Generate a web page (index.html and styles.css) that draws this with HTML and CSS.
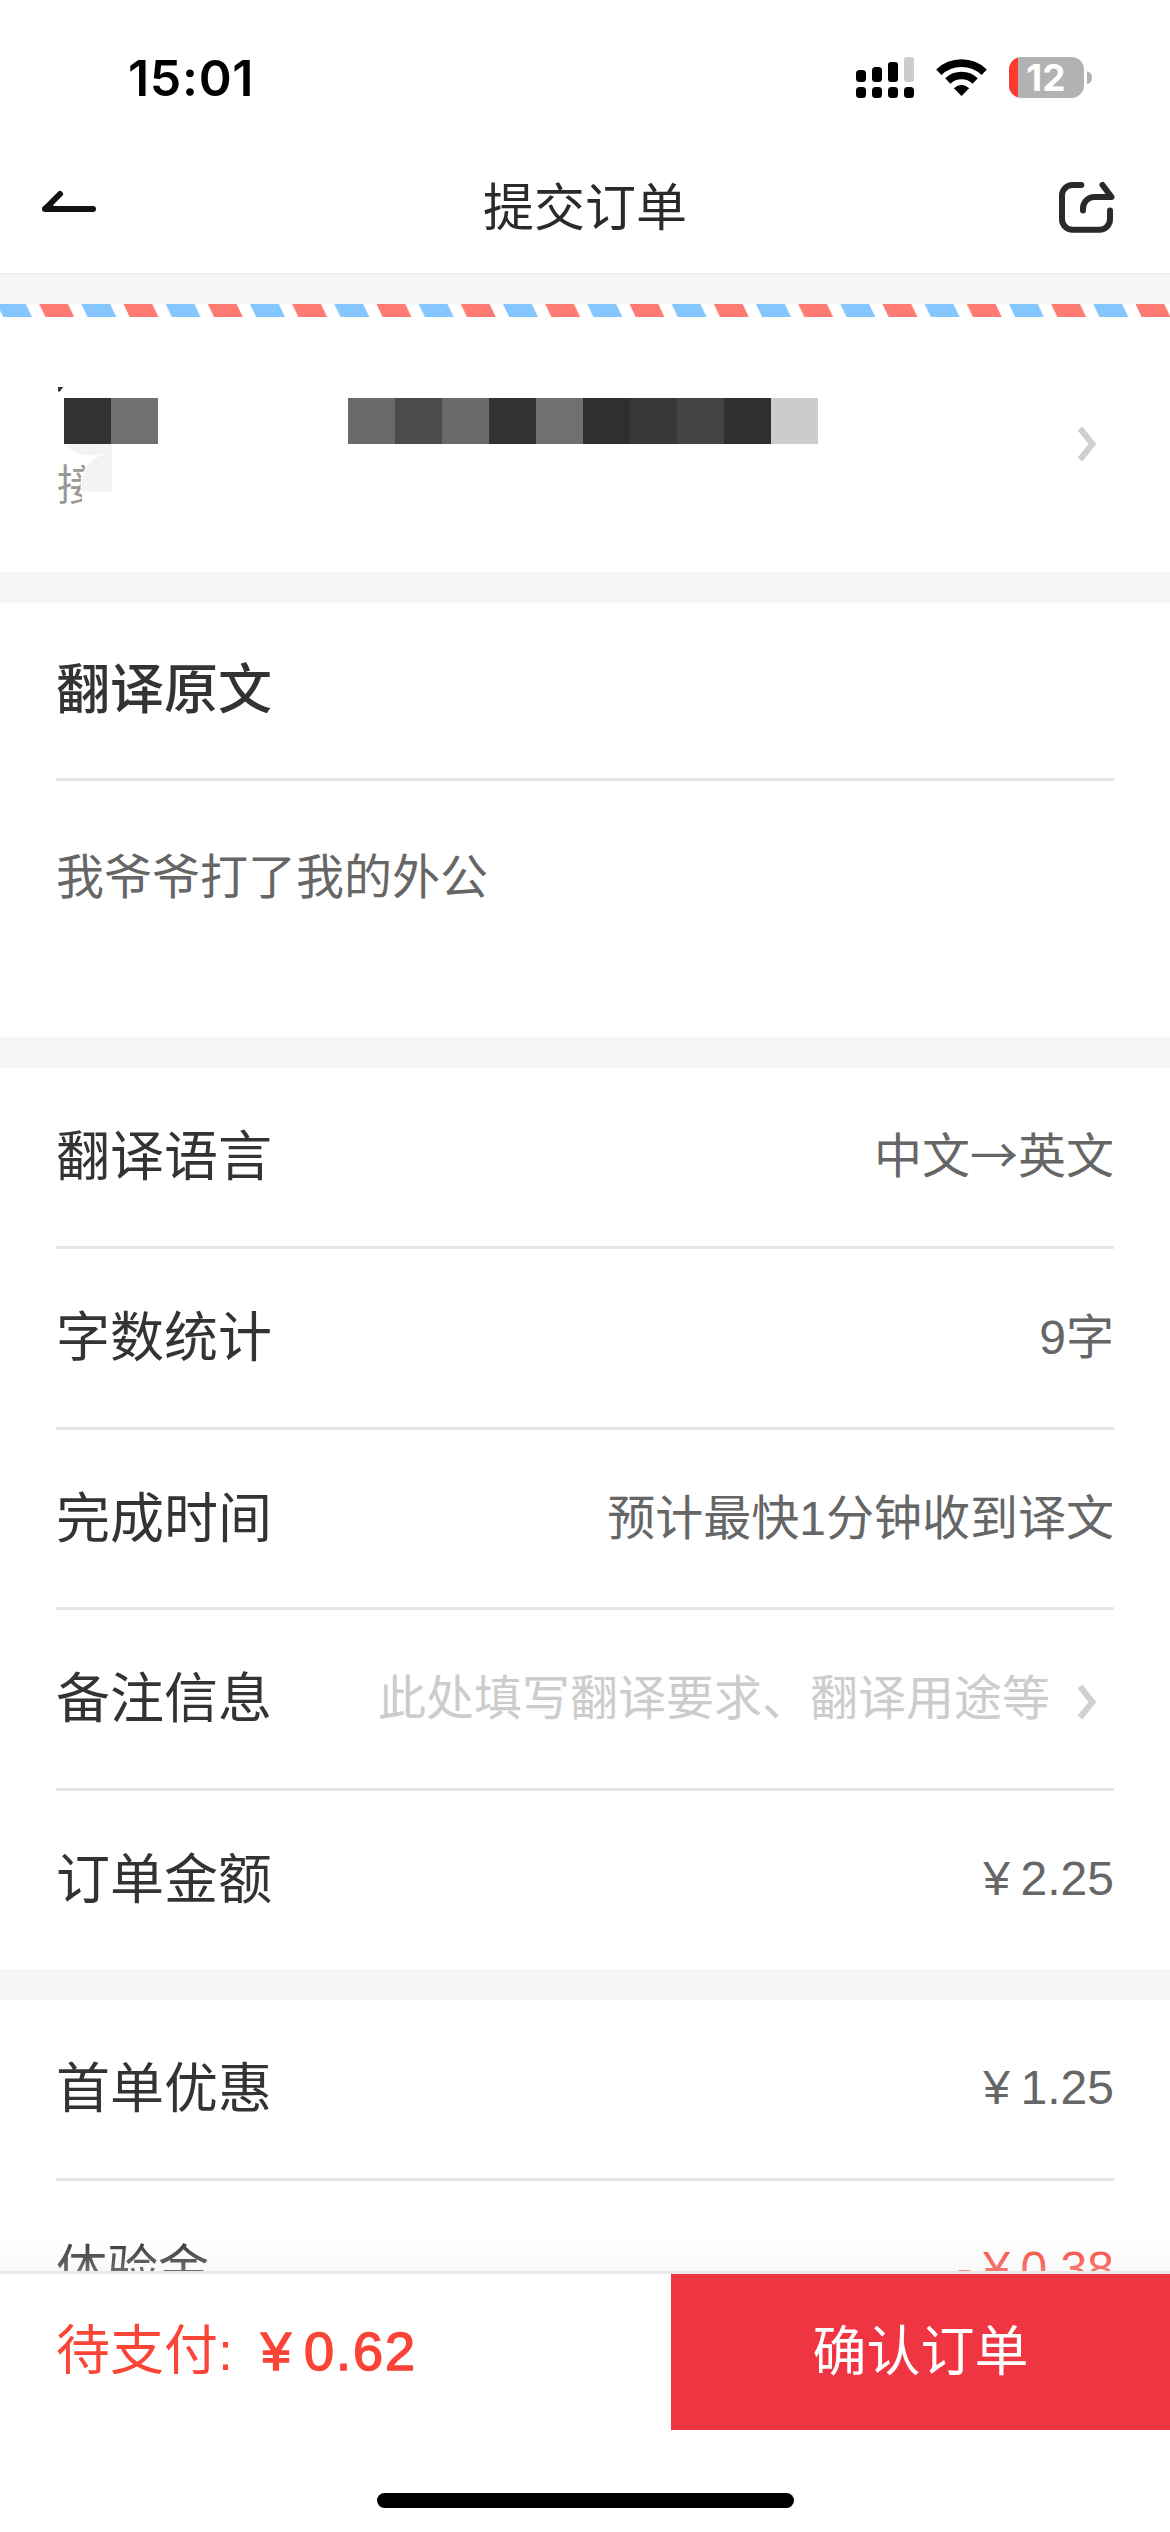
FILE: index.html
```html
<!DOCTYPE html>
<html lang="zh-CN">
<head>
<meta charset="utf-8">
<title>提交订单</title>
<link rel="stylesheet" href="styles.css">
</head>
<body>
<div class="screen">
  <div class="status">
    <span class="time">15:01</span>
    <svg class="status-icons" width="240" height="48" viewBox="855 54 240 48">
      <g fill="#000">
        <rect x="856" y="70" width="10" height="12" rx="3.5"/>
        <rect x="872" y="67" width="10" height="15" rx="3.5"/>
        <rect x="888" y="62" width="10" height="20" rx="3"/>
        <rect x="856" y="87" width="10" height="11" rx="3.5"/>
        <rect x="872" y="87" width="10" height="11" rx="3.5"/>
        <rect x="888" y="87" width="10" height="11" rx="3.5"/>
        <rect x="904" y="87" width="10" height="11" rx="3.5"/>
      </g>
      <rect x="904" y="57" width="10" height="25" rx="3" fill="#ccc"/>
      <g fill="none" stroke="#000" stroke-width="7.6">
        <path d="M938.8 72.2A33 33 0 0 1 984.2 72.2"/>
        <path d="M947.8 81A20 20 0 0 1 975.2 81"/>
      </g>
      <path d="M953.8 88.2Q961.5 81.2 969.2 88.2L961.5 96z" fill="#000"/>
      <clipPath id="cell"><rect x="1009" y="57" width="75" height="41" rx="12.5"/></clipPath>
      <g clip-path="url(#cell)">
        <rect x="1009" y="57" width="75" height="41" fill="#b2b2b2"/>
        <rect x="1009" y="57" width="9" height="41" fill="#ff3b30"/>
      </g>
      <path d="M1087 71.5a6.4 6.4 0 0 1 0 12.5z" fill="#b2b2b2"/>
      <text x="1046" y="91" class="battery-text">12</text>
    </svg>
  </div>

  <header class="nav">
    <svg width="60" height="60" viewBox="40 177 60 60" fill="none" stroke="#111214" stroke-width="6" stroke-linecap="round" stroke-linejoin="round">
      <path d="M93 210H45L60 195"/><path d="M45.5 209.5L51 208" />
    </svg>
    <h1>提交订单</h1>
    <svg width="60" height="60" viewBox="1056 177 60 60" fill="none" stroke="#282a2c" stroke-width="6" stroke-linecap="round" stroke-linejoin="round">
      <path d="M1081.3 186H1072.5A10.5 10.5 0 0 0 1062 196.500V220A10.500 10.500 0 0 0 1072.500 230.700H1099.500A10.500 10.500 0 0 0 1110 220V211.500"/>
      <path d="M1083 211.500V209.500A11.500 11.500 0 0 1 1095 198H1111.500L1102.500 186"/>
    </svg>
  </header>

  <svg class="stripes" width="1170" height="13" viewBox="0 0 1170 13">
    <defs>
      <pattern id="airmail" x="-3" width="84.33" height="13" patternUnits="userSpaceOnUse">
        <path d="M0 0H28.800L35 13H6.200z" fill="#84c6fd"/>
        <path d="M42.160 0H70.960L77.160 13H48.360z" fill="#fd7b73"/>
      </pattern>
    </defs>
    <rect width="1170" height="13" fill="url(#airmail)"/>
  </svg>

  <section class="contact">
    <div class="contact-info">
      <div class="contact-line">
        <div class="mosaic">
          <i class="g1"></i><i class="g2"></i>
        </div>
        <div class="mosaic">
          <i class="g3"></i><i class="g4"></i><i class="g3"></i><i class="g1"></i><i class="g2"></i><i class="g5"></i><i class="g6"></i><i class="g7"></i><i class="g5"></i><i class="g8"></i>
        </div>
      </div>
      <p class="contact-sub">接</p>
      <svg class="smudge" width="60" height="130" viewBox="56 385 60 130">
        <path d="M58 387H63.500L62 388.500L60 391.500H58z" fill="#333"/>
        <path d="M88 463Q77 480 82 495V510H112V463z" fill="#fff"/>
        <path d="M64 444H112V491.500H82Q79 462 107 453Q81 461 64 444z" fill="#f3f3f3"/>
      </svg>
    </div>
    <svg class="chev" width="24" height="38" viewBox="0 0 24 38"><path d="M4 3.500L16.500 19L4 34.500"/></svg>
  </section>

  <section class="card source">
    <h2>翻译原文</h2>
    <p>我爷爷打了我的外公</p>
  </section>

  <section class="card">
    <div class="row"><span class="label">翻译语言</span><span class="value">中文<span class="arrow">→</span>英文</span></div>
    <div class="row"><span class="label">字数统计</span><span class="value">9字</span></div>
    <div class="row tight"><span class="label">完成时间</span><span class="value">预计最快1分钟收到译文</span></div>
    <div class="row"><span class="label">备注信息</span><span class="value hint">此处填写翻译要求、翻译用途等</span><svg class="chev low" width="24" height="38" viewBox="0 0 24 38"><path d="M4 3.500L16.500 19L4 34.500"/></svg></div>
    <div class="row"><span class="label">订单金额</span><span class="value money"><span class="yen">¥</span>2.25</span></div>
  </section>

  <section class="card last">
    <div class="row"><span class="label">首单优惠</span><span class="value money"><span class="yen">¥</span>1.25</span></div>
    <div class="row"><span class="label small">体验金</span><span class="value money red">-<span class="yen">¥</span>0.38</span></div>
  </section>

  <footer class="pay">
    <div class="pay-row">
      <div class="due">待支付:<strong><span class="yen">¥</span>0.62</strong></div>
      <button class="confirm">确认订单</button>
    </div>
    <div class="home"></div>
  </footer>
</div>
</body>
</html>
```
FILE: styles.css
```css
* { box-sizing: border-box; margin: 0; padding: 0; }

body {
  width: 1170px;
  background: #f5f6f8;
  font-family: "Liberation Sans", "Noto Sans CJK SC", sans-serif;
  color: #333;
}

svg { display: block; flex: none; }

.screen {
  width: 1170px;
  height: 2532px;
  display: flex;
  flex-direction: column;
  overflow: hidden;
}

.status {
  flex: none;
  height: 141px;
  padding: 54px 75px 0 128px;
  display: flex;
  justify-content: space-between;
  background: #fff;
}

.time {
  font: 600 50px/48px Inter, sans-serif;
  letter-spacing: .7px;
  color: #000;
}

.battery-text {
  font: 700 37px Inter, sans-serif;
  fill: #fff;
  text-anchor: middle;
}

.nav {
  flex: none;
  height: 134px;
  padding: 0 54px 2px 40px;
  display: flex;
  align-items: center;
  justify-content: space-between;
  background: #fff;
  border-bottom: 2px solid #ededee;
}

.nav h1 {
  font-size: 51px;
  font-weight: 400;
  line-height: 60px;
  color: #282a2c;
  margin-left: 14px;
  padding-top: 5px;
}

.stripes { margin-top: 29px; background: #fff; }

.contact {
  flex: none;
  height: 255px;
  margin-bottom: 31px;
  padding: 81px 70px 0 57px;
  display: flex;
  justify-content: space-between;
  background: #fff;
}

.contact-info { position: relative; }

.contact-line { display: flex; gap: 190px; padding-left: 7px; }

.mosaic { display: flex; }
.mosaic i { width: 47px; height: 46px; }
.mosaic .g1 { background: #323232; }
.mosaic .g2 { background: #707070; }
.mosaic .g3 { background: #6a6a6a; }
.mosaic .g4 { background: #4b4b4b; }
.mosaic .g5 { background: #2f2f2f; }
.mosaic .g6 { background: #383838; }
.mosaic .g7 { background: #444; }
.mosaic .g8 { background: #ccc; }

.contact-sub {
  margin-top: 12px;
  font-size: 42px;
  line-height: 60px;
  color: #999;
}

.smudge { position: absolute; left: -1px; top: -13px; }

.chev { fill: none; stroke: #d0d0d0; stroke-width: 6; }
.contact .chev { margin-top: 27px; }
.chev.low { margin: 6px 14px 0 26px; }

.card {
  flex: none;
  margin-bottom: 31px;
  padding: 0 56px;
  background: #fff;
}

.source { height: 434px; }

.source h2 {
  height: 178px;
  border-bottom: 3px solid #e5e5e5;
  font-size: 54px;
  font-weight: 500;
  line-height: 174px;
}

.source p {
  margin-top: 67px;
  font-size: 48px;
  line-height: 60px;
  color: #666;
}

.row {
  height: 181px;
  display: flex;
  align-items: center;
  border-bottom: 3px solid #e5e5e5;
}

.row.tight { height: 180px; }

.row:last-child { height: 178px; border-bottom: 0; }

.label { font-size: 54px; line-height: 60px; }
.label.small { font-size: 51px; }

.value {
  margin-left: auto;
  font-size: 48px;
  line-height: 60px;
  color: #666;
}

.value.money { padding-bottom: 3px; }
.value.hint { color: #ccc; }
.value.red { color: #fa4437; }
.arrow { font-family: "Noto Sans CJK SC", sans-serif; line-height: 1; }

.yen { display: inline-block; width: 1em; text-align: center; }

.last { margin-bottom: 0; }

.pay {
  position: absolute;
  left: 0;
  top: 2271px;
  width: 1170px;
  height: 261px;
  border-top: 3px solid #e9e9e9;
  background: #fff;
}

.pay::before {
  content: "";
  position: absolute;
  left: 0;
  right: 0;
  top: -39px;
  height: 36px;
  background: linear-gradient(rgba(238, 238, 238, 0), rgba(238, 238, 238, .3));
}

.pay-row { display: flex; height: 156px; justify-content: space-between; }

.due {
  padding-left: 56px;
  font-size: 54px;
  line-height: 154px;
  color: #fa4437;
}

.due strong {
  margin-left: 17px;
  font-weight: 400;
  letter-spacing: 2px;
  -webkit-text-stroke: 1.5px #fa4437;
}

.confirm {
  width: 499px;
  border: 0;
  background: #f03542;
  color: #fff;
  font: 54px/156px "Liberation Sans", "Noto Sans CJK SC", sans-serif;
}

.home {
  width: 417px;
  height: 15px;
  margin: 63px auto 0;
  border-radius: 8px;
  background: #000;
}
```
